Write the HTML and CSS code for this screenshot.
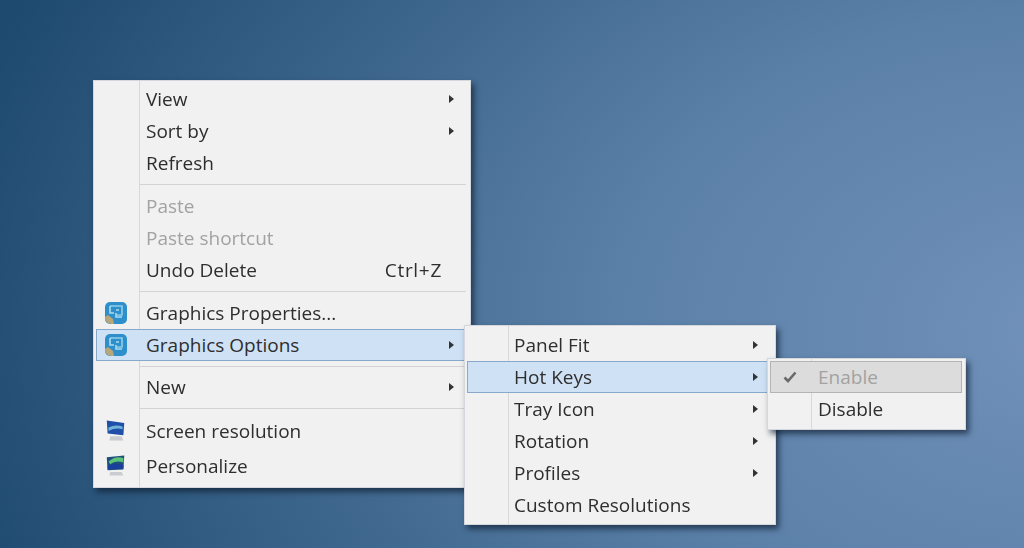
FILE: index.html
```html
<!DOCTYPE html>
<html lang="en">
<head>
    <meta charset="UTF-8">
    <title>Desktop context menu</title>
    <link rel="stylesheet" href="styles.css">
</head>
<body>
    <div class="desktop">
        <div class="menu main-menu">
            <div class="item"><span class="label">View</span><span class="arrow"></span></div>
            <div class="item"><span class="label">Sort by</span><span class="arrow"></span></div>
            <div class="item"><span class="label">Refresh</span></div>
            <div class="separator"></div>
            <div class="item disabled"><span class="label">Paste</span></div>
            <div class="item disabled"><span class="label">Paste shortcut</span></div>
            <div class="item"><span class="label">Undo Delete</span><span class="shortcut">Ctrl+Z</span></div>
            <div class="separator"></div>
            <div class="item">
                <svg class="icon" viewBox="0 0 24 24">
                    <rect x="1" y="1" width="22" height="22" rx="5" fill="#2f8fca"/>
                    <path d="M1 16 Q1 23 8 23 L10 23 L9 18 L4 14 Z" fill="#b9a777"/>
                    <path d="M6 5h12v9h-5" fill="none" stroke="#8fd0ea" stroke-width="1.6"/>
                    <path d="M6 5v7h4M12 9h3M12 12v4h6" fill="none" stroke="#a9dcef" stroke-width="1.6"/>
                </svg>
                <span class="label">Graphics Properties...</span>
            </div>
            <div class="item active">
                <svg class="icon" viewBox="0 0 24 24">
                    <rect x="1" y="1" width="22" height="22" rx="5" fill="#2f8fca"/>
                    <path d="M1 16 Q1 23 8 23 L10 23 L9 18 L4 14 Z" fill="#b9a777"/>
                    <path d="M6 5h12v9h-5" fill="none" stroke="#8fd0ea" stroke-width="1.6"/>
                    <path d="M6 5v7h4M12 9h3M12 12v4h6" fill="none" stroke="#a9dcef" stroke-width="1.6"/>
                </svg>
                <span class="label">Graphics Options</span><span class="arrow"></span>
            </div>
            <div class="separator tight"></div>
            <div class="item"><span class="label">New</span><span class="arrow"></span></div>
            <div class="separator tight"></div>
            <div class="item tall">
                <svg class="icon small" viewBox="0 0 24 24">
                    <path d="M2 1 L22 4 L21 18 L3 16 Z" fill="#1f4fa8"/>
                    <path d="M4 9 Q12 5 20 8 L20 11 Q12 9 4 13 Z" fill="#6fb4d8"/>
                    <path d="M6 19h13l2 5H5z" fill="#c9ccd0"/>
                </svg>
                <span class="label">Screen resolution</span>
            </div>
            <div class="item tall">
                <svg class="icon small" viewBox="0 0 24 24">
                    <path d="M2 3 L22 1 L21 17 L3 18 Z" fill="#1d4f7c"/>
                    <path d="M4 8 Q12 1 21 4 L21 9 Q12 6 6 11 Z" fill="#5cc27a"/>
                    <path d="M3 13 Q12 9 21 12 L21 16 L3 17 Z" fill="#1a3f9c"/>
                    <path d="M6 20h13l2 4H5z" fill="#c9ccd0"/>
                </svg>
                <span class="label">Personalize</span>
            </div>
        </div>

        <div class="menu sub-menu">
            <div class="item"><span class="label">Panel Fit</span><span class="arrow"></span></div>
            <div class="item active"><span class="label">Hot Keys</span><span class="arrow"></span></div>
            <div class="item"><span class="label">Tray Icon</span><span class="arrow"></span></div>
            <div class="item"><span class="label">Rotation</span><span class="arrow"></span></div>
            <div class="item"><span class="label">Profiles</span><span class="arrow"></span></div>
            <div class="item"><span class="label">Custom Resolutions</span></div>
        </div>

        <div class="menu option-menu">
            <div class="item checked disabled">
                <svg class="check" viewBox="0 0 14 12"><path d="M1.5 6.5 L5 10 L12.5 1.5" fill="none" stroke="#6a6a6a" stroke-width="2.6"/></svg>
                <span class="label">Enable</span>
            </div>
            <div class="item"><span class="label">Disable</span></div>
        </div>
    </div>
</body>
</html>
```

FILE: styles.css
```css
html, body {
    margin: 0;
    height: 100%;
    overflow: hidden;
}
.desktop {
    position: relative;
    width: 1024px;
    height: 548px;
    overflow: hidden;
    background-color: #4a7099;
    background-image: radial-gradient(ellipse 1150px 800px at 105% 60%, #7292ba 0%, #5b80a8 40%, #3a6389 72%, #1f4a70 100%);
    font-family: "Open Sans", "Noto Sans", sans-serif;
}
.menu {
    position: absolute;
    box-sizing: border-box;
    padding: 2px;
    background-color: #f1f1f1;
    border: 1px solid #d4d8dc;
    box-shadow: 3px 4px 6px rgba(10, 25, 45, 0.65);
    background-image: linear-gradient(#d8d8d8, #d8d8d8);
    background-repeat: no-repeat;
    background-size: 1px 100%;
    filter: blur(0.6px);
}
.main-menu {
    left: 93px;
    top: 80px;
    width: 378px;
    height: 408px;
    background-position: 45px 0;
}
.sub-menu {
    left: 464px;
    top: 325px;
    width: 312px;
    height: 200px;
    padding-top: 3px;
    background-position: 43px 0;
}
.option-menu {
    left: 767px;
    top: 358px;
    width: 199px;
    height: 72px;
    padding-right: 3px;
    background-position: 43px 0;
}
.item {
    display: flex;
    align-items: center;
    box-sizing: border-box;
    height: 32px;
    padding-left: 50px;
    padding-right: 14px;
    font-size: 19px;
    color: #2e2e2e;
    position: relative;
}
.sub-menu .item {
    padding-left: 47px;
    padding-right: 15px;
}
.option-menu .item {
    padding-left: 48px;
}
.item.tall {
    height: 35px;
}
.item.active {
    background-color: #cfe2f5;
    outline: 1px solid #86a9cb;
    outline-offset: -1px;
}
.item.disabled {
    color: #a2a2a2;
}
.option-menu .item.checked {
    background-color: #dcdcdc;
    outline: 1px solid #b4b4b4;
    outline-offset: -1px;
}
.label {
    flex: 1;
    white-space: nowrap;
}
.arrow {
    width: 0;
    height: 0;
    border-left: 5px solid #333;
    border-top: 4px solid transparent;
    border-bottom: 4px solid transparent;
}
.shortcut {
    margin-right: 12px;
    letter-spacing: 0.7px;
}
.separator {
    height: 1px;
    margin: 5px 2px 5px 44px;
    background-color: #d3d3d3;
}
.separator.tight {
    margin-bottom: 4px;
}
.icon {
    position: absolute;
    left: 8px;
    top: 4px;
    width: 24px;
    height: 24px;
    filter: blur(0.7px);
}
.icon.small {
    left: 9px;
    width: 21px;
    height: 26px;
}
.check {
    position: absolute;
    left: 13px;
    top: 10px;
    width: 14px;
    height: 12px;
}
```
